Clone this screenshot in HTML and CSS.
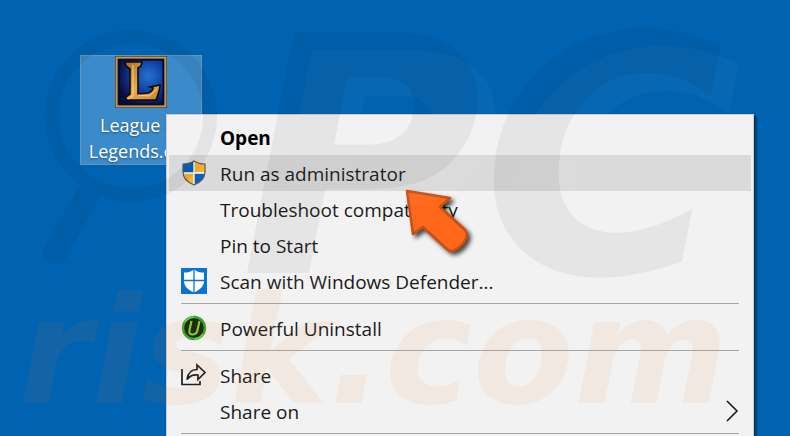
FILE: index.html
```
<!DOCTYPE html>
<html lang="en">
<head>
  <meta charset="UTF-8">
  <meta name="viewport" content="width=device-width, initial-scale=1.0">
  <title>Desktop</title>
  <link rel="stylesheet" href="styles.css">
</head>
<body>

  <main class="desktop">
    <button class="shortcut" type="button">
      <svg class="shortcut-icon" viewBox="0 0 52 52" aria-hidden="true">
        <defs>
          <radialGradient id="sea" cx="65%" cy="38%" r="65%">
            <stop offset="0" stop-color="#2474cc"/>
            <stop offset=".5" stop-color="#103fa4"/>
            <stop offset="1" stop-color="#080c3a"/>
          </radialGradient>
          <linearGradient id="gold" x1="0" y1="0" x2="1" y2="1">
            <stop offset="0" stop-color="#a86b24"/>
            <stop offset=".5" stop-color="#e6ac4e"/>
            <stop offset="1" stop-color="#c88430"/>
          </linearGradient>
        </defs>
        <rect width="52" height="52" fill="#201c18"/>
        <rect x="1.7" y="1.7" width="48.6" height="48.6" fill="url(#sea)" stroke="#c09a50" stroke-width="2.4"/>
        <rect x="3.7" y="3.7" width="44.6" height="44.6" fill="none" stroke="#080c30" stroke-width="2"/>
        <path d="M10 6h17l-1 4-3 2v26l10-1c4-1 5-4 5-5l-3-1 10-2c0 4-2 10-4 15H11v-3l4-3V13l-4-3z" fill="url(#gold)" stroke="#100b12" stroke-width="1.6"/>
        <path d="M18 9v31l-5 3M23 39l11 1 8-7" fill="none" stroke="#ffd078" stroke-width="1"/>
      </svg>
      <span class="shortcut-name">League of<br>Legends.exe</span>
    </button>

    <ul class="menu">
      <li><button class="item default" type="button"><span class="icon"></span>Open</button></li>
      <li>
        <button class="item active" type="button">
          <span class="icon">
            <svg width="24" height="26" viewBox="0 0 24 26">
              <path d="M12 1C9 3 5 4 1 4v8c0 6 4 10 11 13z" fill="#0862bd"/>
              <path d="M12 1c3 2 7 3 11 3v8c0 6-4 10-11 13z" fill="#f9b42c"/>
              <path d="M1 13h11v12C5 22 1 18 1 13z" fill="#f9b42c"/>
              <path d="M12 13h11c0 5-4 9-11 12z" fill="#0862bd"/>
              <path d="M12 2v22M1 13h22" stroke="#fff" stroke-width="1.3"/>
              <path d="M12 1C9 3 5 4 1 4v8c0 6 4 10 11 13 7-3 11-7 11-13V4c-4 0-8-1-11-3z" fill="none" stroke="#555b60" stroke-width="1.2"/>
            </svg>
          </span>Run as administrator
        </button>
      </li>
      <li><button class="item" type="button"><span class="icon"></span>Troubleshoot compatibility</button></li>
      <li><button class="item" type="button"><span class="icon"></span>Pin to Start</button></li>
      <li>
        <button class="item" type="button">
          <span class="icon">
            <svg width="26" height="26" viewBox="0 0 26 26">
              <rect width="26" height="26" fill="#0874d4"/>
              <path d="M13 1.5C10 4 6.500 4.500 3 4.500V13c0 5 4 9 10 11.500C19 22 23 18 23 13V4.500c-3.500 0-7-.5-10-3z" fill="#fff"/>
              <path d="M13 1v24M2 12.500h22" stroke="#0874d4" stroke-width="1.300"/>
            </svg>
          </span>Scan with Windows Defender...
        </button>
      </li>
      <li class="separator" role="separator"></li>
      <li>
        <button class="item" type="button">
          <span class="icon">
            <svg width="26" height="26" viewBox="0 0 26 26">
              <circle cx="13" cy="13" r="11" fill="#17240f" stroke="#35a52e" stroke-width="2.400"/>
              <path d="M4 7a11 11 0 0 1 9-5M22 19a11 11 0 0 1-9 5" fill="none" stroke="#58dc3e" stroke-width="1.500"/>
              <path d="M10.500 6L8.500 15q-1 4.500 3 4.500t5-4.500l2-9" fill="none" stroke="#70d832" stroke-width="2.200"/>
            </svg>
          </span>Powerful Uninstall
        </button>
      </li>
      <li class="separator" role="separator"></li>
      <li>
        <button class="item" type="button">
          <span class="icon">
            <svg width="26" height="26" viewBox="0 0 26 26" fill="none" stroke="#1c1c1c" stroke-width="1.700">
              <path d="M1 7v15.500h18V19"/>
              <path d="M6 17.500C7 10.500 11 7.500 16 7.500V3l8 7.500-7 7V13c-4-.5-8 .5-11 4.500z"/>
            </svg>
          </span>Share
        </button>
      </li>
      <li>
        <button class="item" type="button">
          <span class="icon"></span>Share on
          <svg class="chevron" width="14" height="24" viewBox="0 0 14 24">
            <path d="M2 2l10 10L2 22" fill="none" stroke="#1c1c1c" stroke-width="1.600"/>
          </svg>
        </button>
      </li>
      <li class="separator" role="separator"></li>
    </ul>

    <svg class="pointer" viewBox="0 0 72 72" aria-hidden="true">
      <path d="M4 4l43 7-10 9 25 23q4 5-1 12t-12 9q-3 0-5-2L20 40 10 47z" fill="#ff671b" stroke="#c94e12" stroke-width="2.500" stroke-linejoin="round"/>
    </svg>

    <div class="watermark" aria-hidden="true">
      <svg class="lens" width="190" height="260" viewBox="0 0 190 260">
        <path d="M58 176L26 233" stroke="#000" stroke-width="24" stroke-linecap="round"/>
        <circle cx="102" cy="96" r="79" fill="none" stroke="#000" stroke-width="14"/>
      </svg>
      <span class="mark-top">PC</span>
      <span class="mark-bottom">.risk.com</span>
    </div>
  </main>

</body>
</html>
```
FILE: styles.css
```
* {
  box-sizing: border-box;
}

body {
  margin: 0;
  font-family: "Open Sans", "Noto Sans", sans-serif;
  font-size: 19px;
  color: #1a1a1a;
  background: #0063b1;
}

button {
  margin: 0;
  font: inherit;
  color: inherit;
}

.desktop {
  position: relative;
  height: 100vh;
  padding: 55px 80px;
  overflow: hidden;
}

.shortcut {
  display: flex;
  flex-direction: column;
  align-items: center;
  width: 122px;
  padding: 0;
  border: 1px solid #7292aa;
  background: #3b8aca;
  color: #fff;
  line-height: 26px;
}

.shortcut-icon {
  width: 52px;
  height: 52px;
  margin-bottom: 4px;
}

.shortcut-name {
  font-size: 18px;
  text-shadow: 0 1px 2px rgba(0, 0, 0, 0.4);
}

/* context menu */
.menu {
  position: absolute;
  top: 114px;
  left: 166px;
  right: 36px;
  margin: 0;
  padding: 4px 2px;
  list-style: none;
  border: 1px solid #ccc;
  background: #f2f2f2;
  box-shadow: 2px 2px 3px rgba(0, 0, 0, 0.6);
}

.item {
  display: flex;
  align-items: center;
  width: 100%;
  height: 36px;
  padding: 2px 12px 0;
  border: 0;
  background: none;
  text-align: left;
  white-space: nowrap;
}

.item.default {
  font-weight: bold;
  color: #000;
}

.item.active {
  background: #dadada;
}

.icon {
  display: flex;
  justify-content: center;
  width: 26px;
  margin-right: 13px;
  padding-bottom: 2px;
}

.chevron {
  margin-left: auto;
  margin-bottom: 2px;
}

.separator {
  height: 1px;
  margin: 4px 12px 6px;
  background: #a5a5a5;
}

.pointer {
  position: absolute;
  top: 187px;
  left: 403px;
  width: 72px;
  height: 72px;
  overflow: visible;
  filter: drop-shadow(3px 3px 2px rgba(0, 0, 0, 0.7));
}

/* watermark over the whole desktop */
.watermark {
  position: absolute;
  inset: 0;
  overflow: hidden;
  pointer-events: none;
  font-family: "DejaVu Sans", sans-serif;
  font-weight: bold;
  font-style: oblique;
  line-height: 1;
  white-space: nowrap;
}

.lens {
  position: absolute;
  top: 20px;
  left: 29px;
  opacity: 0.05;
}

.mark-top {
  position: absolute;
  top: -6px;
  left: 240px;
  font-size: 330px;
  color: rgba(0, 0, 0, 0.05);
  text-shadow: 18px 18px 0 rgba(255, 255, 255, 0.03);
}

.mark-bottom {
  position: absolute;
  top: 278px;
  left: -38px;
  font-size: 148px;
  color: rgba(255, 110, 30, 0.07);
}
```
